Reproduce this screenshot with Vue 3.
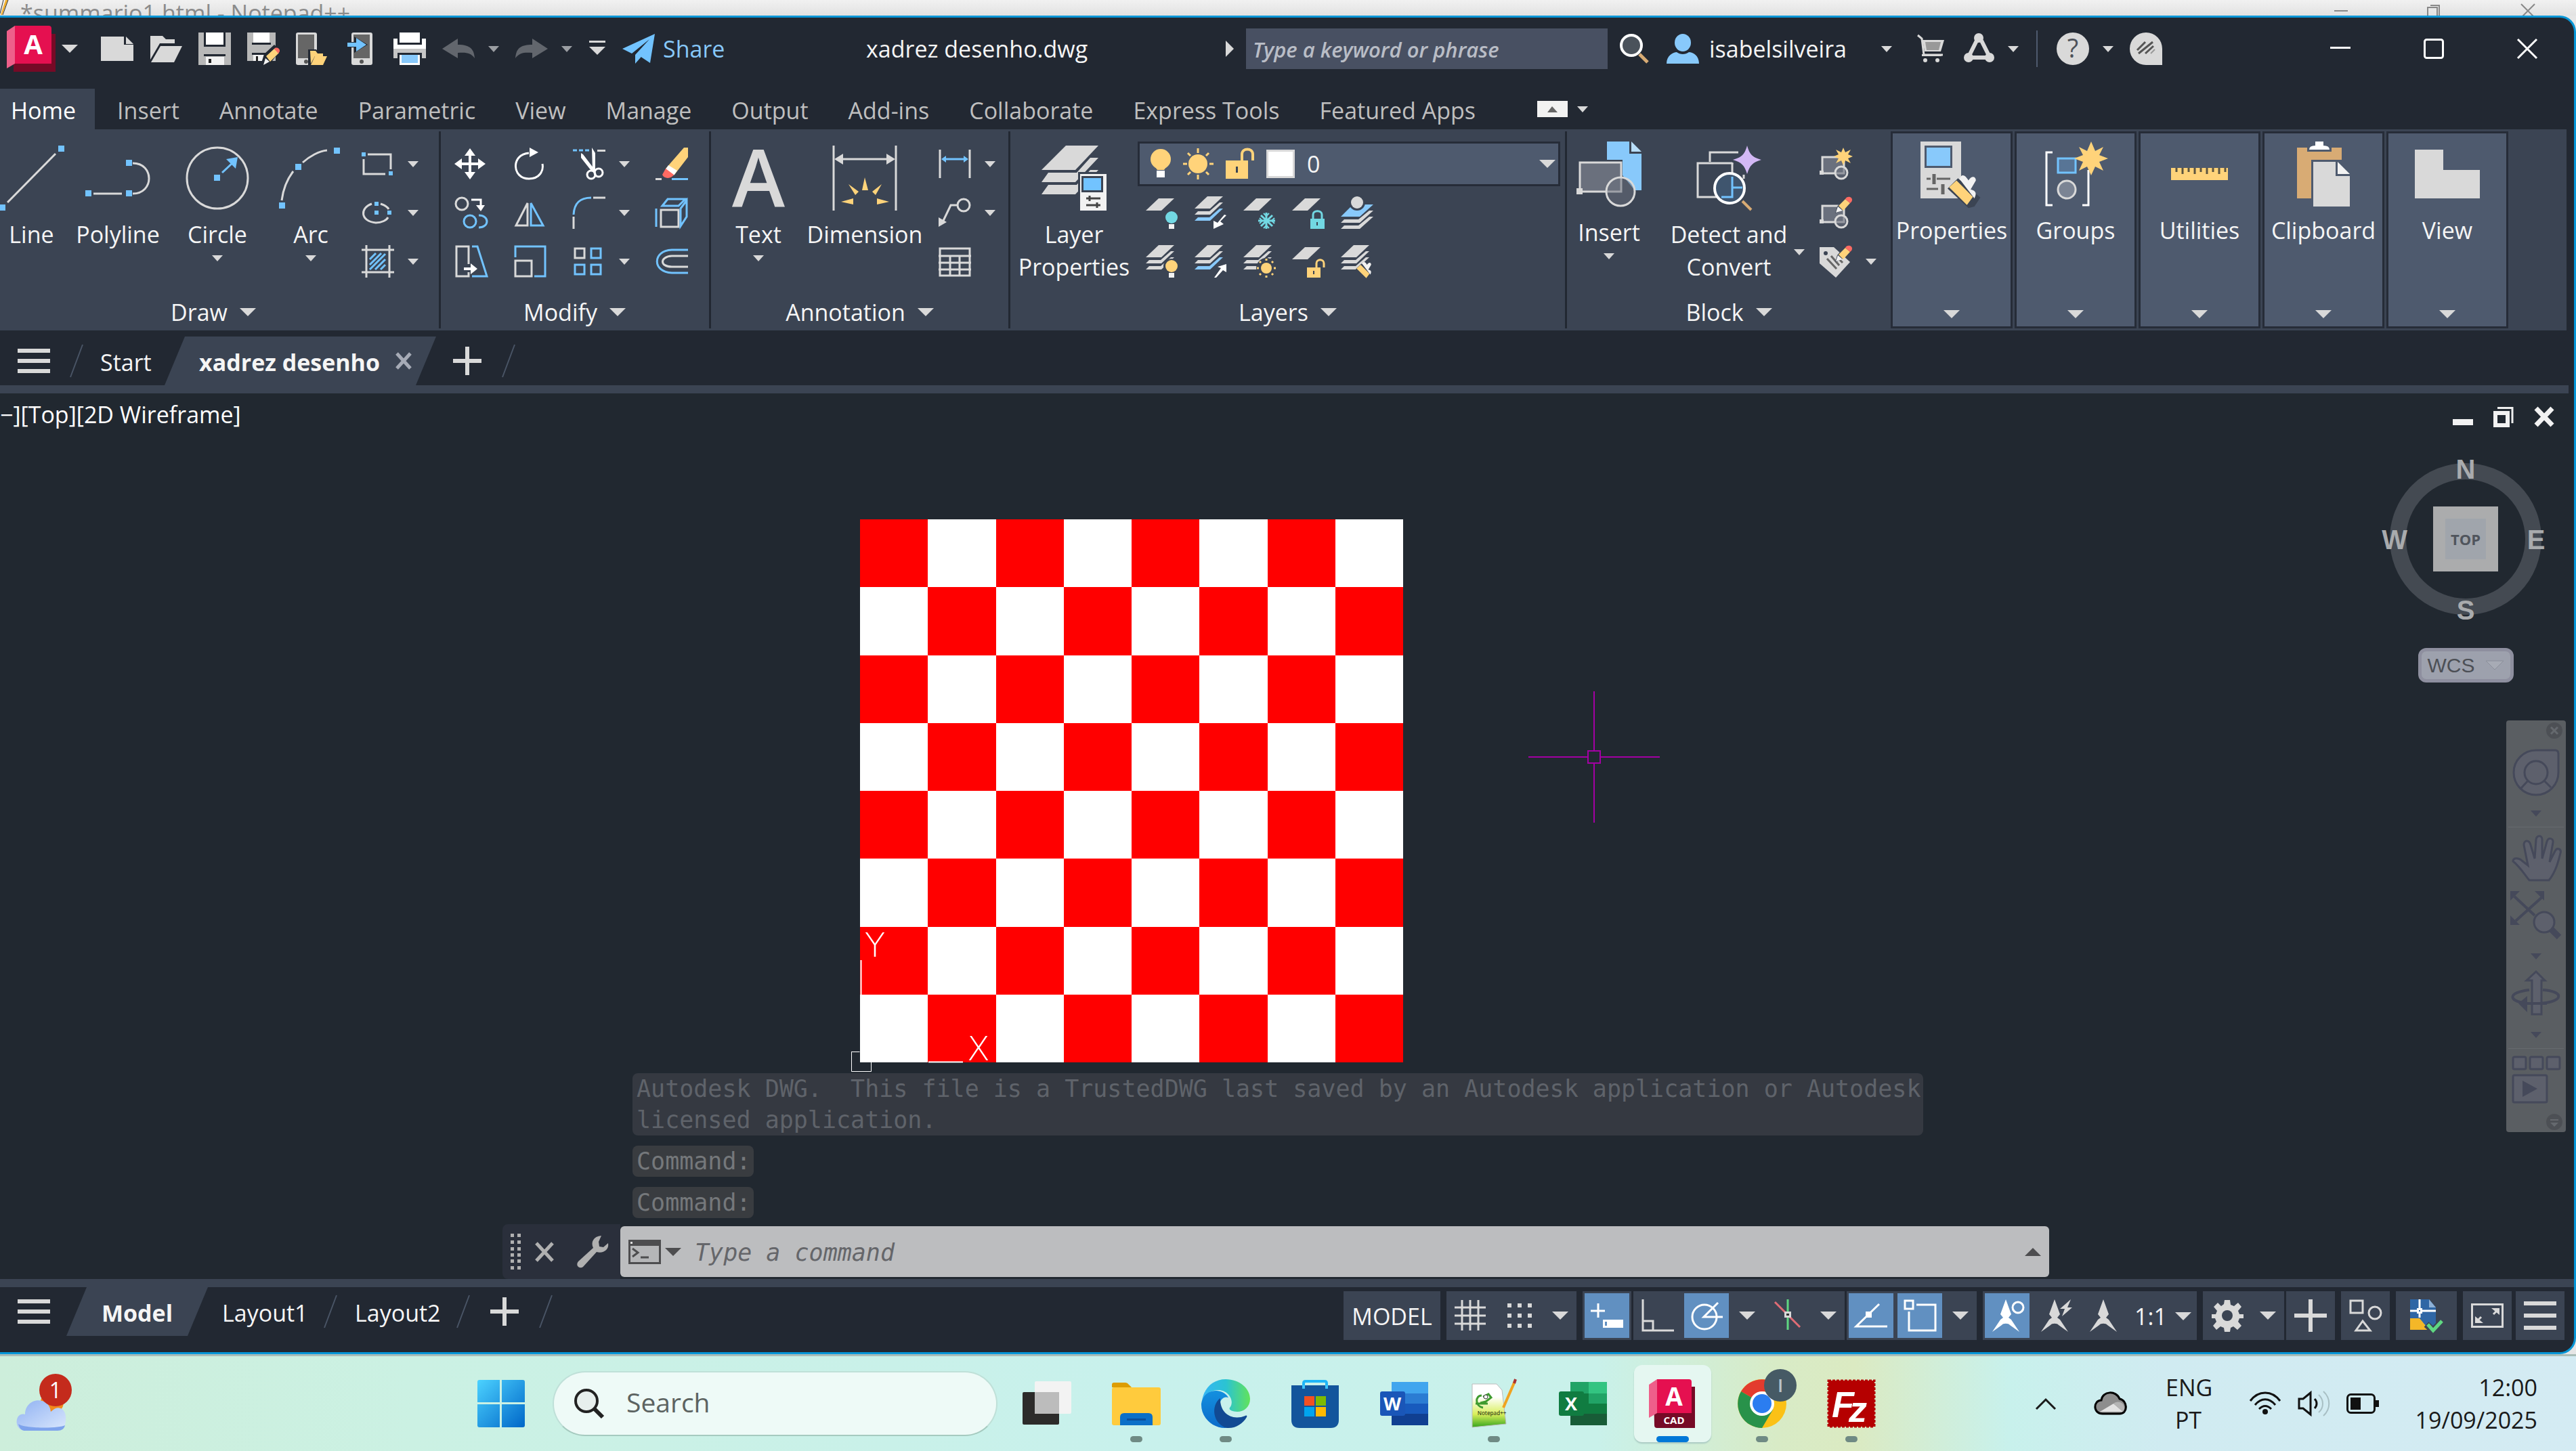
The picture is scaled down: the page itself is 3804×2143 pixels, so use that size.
<template>
  <div class="desktop">
    <!-- window behind -->
    <div class="behind">
      <Icon name="pencilTip" />
      <span class="behind-title">*summario1.html - Notepad++</span>
      <Icon name="behindMin" class="behind-btn" />
      <Icon name="behindMax" class="behind-btn" />
      <Icon name="behindClose" class="behind-btn last" />
    </div>

    <main class="window">
      <header class="titlebar">
        <div class="quick">
          <button class="btn logo" aria-label="Application menu"><Icon name="logo" /><i class="caret mid"></i></button>
          <button v-for="q in quickTools" :key="q.icon" class="btn tool" :aria-label="q.icon">
            <Icon :name="q.icon" /><i v-if="q.caret" class="caret dim"></i>
          </button>
          <button class="btn" aria-label="Customize"><Icon name="customize" /></button>
          <button class="btn share"><Icon name="plane" />Share</button>
        </div>
        <div class="doc-name">xadrez desenho.dwg</div>
        <div class="account">
          <Icon name="expand" />
          <input class="keyword" type="text" aria-label="Search help" placeholder="Type a keyword or phrase" />
          <button class="btn find" aria-label="Search"><Icon name="magnifier" /></button>
          <button class="btn user"><Icon name="person" />isabelsilveira<i class="caret"></i></button>
          <button class="btn cart" aria-label="Cart"><Icon name="cart" /></button>
          <button class="btn tool apps" aria-label="Apps"><Icon name="appStore" /><i class="caret"></i></button>
          <span class="bar"></span>
          <button class="btn tool help" aria-label="Help"><Icon name="help" /><i class="caret"></i></button>
          <button class="btn feedback" aria-label="Feedback"><Icon name="feedback" /></button>
          <div class="win-controls">
            <button class="btn" aria-label="Minimize"><Icon name="winMin" /></button>
            <button class="btn" aria-label="Maximize"><Icon name="winMax" /></button>
            <button class="btn" aria-label="Close"><Icon name="winClose" /></button>
          </div>
        </div>
      </header>

      <nav class="ribbon-tabs">
        <a v-for="(t, i) in ribbonTabs" :key="t" href="#" :class="{ active: i === 0 }">{{ t }}</a>
        <button class="btn collapse" aria-label="Minimize ribbon"><Icon name="collapse" /><i class="caret"></i></button>
      </nav>

      <section class="ribbon">
        <div class="panel draw">
          <div class="panel-body">
            <button v-for="b in drawTools" :key="b.icon" class="btn big">
              <Icon :name="b.icon" /><span>{{ b.label }}</span><i v-if="b.caret" class="caret"></i>
            </button>
            <div class="tools">
              <button v-for="t in drawSmall" :key="t" class="btn tool" :aria-label="t"><Icon :name="t" /><i class="caret"></i></button>
            </div>
          </div>
          <button class="btn panel-title">Draw<i class="caret mid"></i></button>
        </div>

        <div class="panel modify">
          <div class="panel-body">
            <div class="tools">
              <button v-for="t in modifyTools" :key="t.icon" class="btn tool" :aria-label="t.icon">
                <Icon :name="t.icon" /><i v-if="t.caret" class="caret"></i>
              </button>
            </div>
          </div>
          <button class="btn panel-title">Modify<i class="caret mid"></i></button>
        </div>

        <div class="panel annotation">
          <div class="panel-body">
            <button class="btn big"><Icon name="text" /><span>Text</span><i class="caret"></i></button>
            <button class="btn big"><Icon name="dimension" /><span>Dimension</span></button>
            <div class="tools">
              <button class="btn tool" aria-label="Linear"><Icon name="linear" /><i class="caret"></i></button>
              <button class="btn tool" aria-label="Leader"><Icon name="leader" /><i class="caret"></i></button>
              <button class="btn tool" aria-label="Table"><Icon name="table" /></button>
            </div>
          </div>
          <button class="btn panel-title">Annotation<i class="caret mid"></i></button>
        </div>

        <div class="panel layers">
          <div class="panel-body">
            <button class="btn big"><Icon name="layerProps" /><span>Layer<br />Properties</span></button>
            <div class="layer-side">
              <div class="combo">
                <Icon name="bulb" /><Icon name="sun" /><Icon name="unlock" /><Icon name="swatch" />
                <select aria-label="Layer"><option>0</option></select>
                <i class="caret mid"></i>
              </div>
              <div class="tools">
                <button v-for="t in layerTools" :key="t" class="btn tool" :aria-label="t"><Icon :name="t" /></button>
              </div>
            </div>
          </div>
          <button class="btn panel-title">Layers<i class="caret mid"></i></button>
        </div>

        <div class="panel block">
          <div class="panel-body">
            <button class="btn big insert"><Icon name="insert" /><span>Insert</span><i class="caret"></i></button>
            <div class="detect">
              <button class="btn big"><Icon name="detect" /><span>Detect and<br />Convert</span></button>
              <i class="caret"></i>
            </div>
            <div class="tools">
              <button class="btn tool" aria-label="Create block"><Icon name="blockNew" /></button>
              <button class="btn tool" aria-label="Edit block"><Icon name="blockEdit" /></button>
              <button class="btn tool" aria-label="Edit attributes"><Icon name="tagEdit" /><i class="caret"></i></button>
            </div>
          </div>
          <button class="btn panel-title">Block<i class="caret mid"></i></button>
        </div>

        <button v-for="c in collapsedPanels" :key="c.label" class="btn folded">
          <Icon :name="c.icon" /><span>{{ c.label }}</span><i class="caret mid"></i>
        </button>
      </section>

      <nav class="file-tabs">
        <button class="btn" aria-label="Menu"><Icon name="menu" /></button>
        <Icon name="slash" class="slash first" />
        <a href="#" class="start">Start</a>
        <div class="slant file">
          <a href="#">xadrez desenho</a>
          <button class="btn" aria-label="Close tab"><Icon name="tabClose" /></button>
        </div>
        <button class="btn add" aria-label="New tab"><Icon name="plus" /></button>
        <Icon name="slash" class="slash last" />
      </nav>

      <section class="canvas">
        <div class="view-label">−][Top][2D Wireframe]</div>
        <div class="view-controls">
          <button class="btn" aria-label="Minimize view"><Icon name="viewMin" /></button>
          <button class="btn" aria-label="Restore view"><Icon name="viewMax" /></button>
          <button class="btn" aria-label="Close view"><Icon name="viewClose" /></button>
        </div>

        <div class="board">
          <i v-for="n in 64" :key="n" :class="{ red: isRed(n - 1) }"></i>
        </div>
        <Icon name="ucs" class="ucs" />
        <Icon name="crosshair" class="crosshair" />

        <div class="viewcube">
          <Icon name="compass" />
          <button class="btn wcs">WCS<Icon name="wcsArrow" /></button>
        </div>

        <div class="navbar">
          <Icon name="navClose" class="corner" />
          <button class="btn" aria-label="Steering wheel"><Icon name="wheel" /></button>
          <i class="caret"></i>
          <hr />
          <button class="btn" aria-label="Pan"><Icon name="hand" /></button>
          <button class="btn" aria-label="Zoom"><Icon name="zoomExt" /></button>
          <i class="caret"></i>
          <button class="btn" aria-label="Orbit"><Icon name="orbit" /></button>
          <i class="caret"></i>
          <hr />
          <button class="btn" aria-label="ShowMotion"><Icon name="motion" /></button>
          <Icon name="navMore" class="corner more" />
        </div>

        <div class="history">
          <p class="long">Autodesk DWG.&nbsp; This file is a TrustedDWG last saved by an Autodesk application or Autodesk<br />licensed application.</p>
          <p>Command:</p>
          <p>Command:</p>
        </div>

        <div class="command">
          <div class="command-grip">
            <Icon name="grip" />
            <button class="btn" aria-label="Close command line"><Icon name="cmdClose" /></button>
            <button class="btn" aria-label="Customize command line"><Icon name="wrench" /></button>
          </div>
          <div class="command-box">
            <Icon name="prompt" /><i class="caret mid"></i>
            <input type="text" aria-label="Command" placeholder="Type a command" />
            <i class="caret up"></i>
          </div>
        </div>
      </section>

      <footer class="bottom">
        <nav class="layouts">
          <button class="btn" aria-label="Menu"><Icon name="menu" /></button>
          <div class="slant model"><a href="#">Model</a></div>
          <a href="#" class="layout">Layout1</a>
          <Icon name="slash" class="slash" />
          <a href="#" class="layout">Layout2</a>
          <Icon name="slash" class="slash" />
          <button class="btn" aria-label="New layout"><Icon name="plus" /></button>
          <Icon name="slash" class="slash" />
        </nav>
        <div class="status">
          <div v-for="(g, i) in statusGroups" :key="i" class="status-group" :class="g.cls">
            <template v-for="(it, k) in g.items" :key="k">
              <button v-if="it === 'caret'" class="btn drop" aria-label="More"><i class="caret mid"></i></button>
              <button v-else-if="it.text" class="btn word">{{ it.text }}<i v-if="it.caret" class="caret mid"></i></button>
              <button v-else class="btn cell" :class="{ on: it.on }" :aria-label="it.icon"><Icon :name="it.icon" /></button>
            </template>
          </div>
        </div>
      </footer>
    </main>

    <footer class="taskbar">
      <button class="btn weather" aria-label="Weather"><Icon name="weather" /></button>
      <div class="task-center">
        <button class="btn app" aria-label="Start"><Icon name="windows" /></button>
        <label class="search"><Icon name="searchDark" /><input type="text" placeholder="Search" /></label>
        <button v-for="a in apps" :key="a.icon" class="btn app" :class="a.state" :aria-label="a.icon">
          <Icon :name="a.icon" />
        </button>
      </div>
      <div class="tray">
        <Icon name="chevron" />
        <Icon name="cloud" class="tray-cloud" />
        <div class="lang">ENG<br />PT</div>
        <div class="tray-icons"><Icon name="wifi" /><Icon name="speaker" /><Icon name="battery" /></div>
        <div class="clock">12:00<br />19/09/2025</div>
      </div>
    </footer>
  </div>
</template>

<script setup>
import { h } from 'vue'

const G = '#d9d9d9'
const B = '#72c3ff'
const Y = '#ffd37a'
const T = '#72d8e3'
const D = '#3b4453'
const N = '#45495a'

const line = (d, c = G, w = 3) => `<path d="${d}" fill="none" stroke="${c}" stroke-width="${w}"/>`
const fill = (d, c = G) => `<path d="${d}" fill="${c}"/>`
const box = (x, y, w, hh, c = G) => `<rect x="${x}" y="${y}" width="${w}" height="${hh}" fill="${c}"/>`
const frame = (x, y, w, hh, c = G, s = 3) => `<rect x="${x}" y="${y}" width="${w}" height="${hh}" fill="none" stroke="${c}" stroke-width="${s}"/>`
const ring = (x, y, r, c = G, w = 3, f = 'none') => `<circle cx="${x}" cy="${y}" r="${r}" fill="${f}" stroke="${c}" stroke-width="${w}"/>`
const word = (x, y, s, t, c = '#fff', w = 700, f = 'Open Sans') =>
  `<text x="${x}" y="${y}" font-size="${s}" font-weight="${w}" text-anchor="middle" fill="${c}" font-family="${f}, sans-serif">${t}</text>`

// shared pieces of the layer and block icons
const sheet = fill('M19 3H42L23 21H0z')
const stack = (last = G) =>
  fill('M19 0H42L23 18H0z') + fill('M37 9h5L23 27H0l5-5h17z') + fill('M37 18h5L23 36H0l5-5h17z', last)
const pencil = '<path d="M23 25l3-10L38 1c3-2 9 2 8 6L33 21z" fill="#3b4453"/>' +
  fill('M28 14L38 4l7 6-10 11z', Y) + fill('M38 4c2-5 10-4 10 1 0 3-2 4-3 5z', '#ff6b63') + fill('M24 24l3-9 7 6z', '#f2f2f2')
const smallBulb = (c) => `<ellipse cx="38" cy="31" rx="9" ry="9" fill="${c}"/>` + box(34, 41, 8, 7, '#f2f2f2')
const smallBlock = `<rect x="4" y="14" width="32" height="24" fill="#6a707d" stroke="${G}" stroke-width="3"/>` +
  box(0, 34, 6, 6) + `<circle cx="32" cy="37" r="9" fill="#6a707d99" stroke="${G}" stroke-width="3"/>`
const compassMark = (c) => fill('M22 0l8 22-4 5 4 3 12 18-14-10c-2-3-10-3-12 0L2 48l12-18 4-3-4-5z', c)
const brush = (x, y, s) => `<g transform="translate(${x} ${y}) scale(${s})">` +
  fill('M0 16L14 2l30 26-8 12-8 2z', '#3b4453') + fill('M2 14L12 5 34 27 26 38z', Y) +
  fill('M16 3c3-8 8-5 12 2 4-7 10-6 10 0l-7 12c8 2 8 6 5 12z', '#f2f2f2') + '</g>'

const icons = {
  pencilTip: [14, 24, fill('M8 0h4L3 22H1z', '#f2b233') + line('M5 0L0 20M12 0L4 22', '#333', 1)],
  behindMin: [30, 24, box(5, 15, 20, 2, '#888')],
  behindMax: [30, 24, line('M5 24V11h14v13M9 8h13v16', '#888', 2)],
  behindClose: [30, 24, line('M5 6l20 20M25 6L5 26', '#888', 2)],

  logo: [72, 68, fill('M62 12h10v56H10V54h52z', '#760a26') + fill('M12 0h50q4 0 4 4v52H12z', '#e51050') +
    fill('M0 8L12 0v56L0 63z', '#ee5f8a') + word(39, 42, 40, 'A')],
  fileNew: [48, 48, fill('M0 6h34v12h14v24H0z') + fill('M37 6l11 11H37z')],
  fileOpen: [48, 48, fill('M1 5h18l5 5h13v6H15L1 40z') + fill('M16 20h32L36 44H2z')],
  save: [48, 48, box(0, 0, 48, 48, '#b8b8b8') + box(11, 0, 27, 18, '#fff') + box(8, 0, 3, 21, '#222832') + box(37, 0, 3, 21, '#222832') +
    box(8, 18, 32, 3, '#222832') + box(8, 32, 32, 3, '#222832') + box(11, 36, 27, 12, '#f2f2f2') + box(15, 39, 4, 6, '#222')],
  saveAs: [48, 48, box(0, 0, 42, 42, '#b8b8b8') + box(9, 0, 24, 15, '#fff') + box(7, 15, 28, 3, '#222832') + box(7, 30, 20, 3, '#222832') +
    box(9, 33, 18, 9, '#f2f2f2') + box(13, 35, 3, 7, '#222') + fill('M20 48l5-16L40 18l9 8-15 20z', '#222832') +
    fill('M28 35l12-11 7 6-13 13z', Y) + fill('M40 24c2-3 9-1 8 4l-2 3z', '#ff6b63') + fill('M24 48l3-10 6 5z', '#f2f2f2')],
  mobileOpen: [48, 48, '<rect width="31" height="48" rx="3" fill="#d9d9d9"/>' + box(3, 3, 24, 35, '#666') + '<circle cx="15" cy="43" r="3" fill="#555"/>' +
    fill('M18 25h12l3 4h11l4 6-6 13H18z', '#222832') + fill('M21 27h8l3 4h8v4H28l-6 11z', Y) + fill('M28 35h18l-6 13H22z', Y)],
  mobileImport: [48, 48, '<rect x="10" width="31" height="48" rx="3" fill="#d9d9d9"/>' + box(13, 3, 24, 35, '#666') + '<circle cx="25" cy="43" r="3" fill="#555"/>' +
    fill('M2 14h12V6l20 12-20 12v-8H2z', '#222832') + fill('M4 15h13V8l15 10-15 10v-7H4z', B)],
  print: [48, 48, box(9, 0, 30, 15, '#fff') + fill('M0 9h6v9h36V9h6v15H0z', '#fff') + fill('M0 24h48v14h-6V30H6v8H0z', '#c6c6c6') + box(9, 33, 30, 15, '#fff') + box(12, 33, 24, 12, '#88c9fb')],
  undo: [48, 48, fill('M0 24L23 9v9c20 0 24 8 25 20-6-8-12-9-25-8v8z', '#62666d')],
  redo: [48, 48, fill('M48 24L25 9v9C5 18 1 26 0 38c6-8 12-9 25-8v8z', '#62666d')],
  customize: [26, 24, box(1, 0, 24, 3) + fill('M1 9h24L13 21z')],
  plane: [48, 48, fill('M48 2L0 24l14 7L40 10 19 33v13l8-9z', B) + fill('M48 2L23 33l18 12z', B)],
  expand: [12, 24, fill('M0 0l12 12L0 24z')],
  magnifier: [44, 44, ring(18, 17, 15, '#fff', 4, '#4a525b') + line('M30 30l12 12', '#d8ab74', 5)],
  person: [48, 48, '<ellipse cx="24" cy="15" rx="12" ry="13" fill="#88c9fb"/>' + fill('M0 46c0-12 10-17 15-17 5 4 13 4 18 0 6 0 15 5 15 17z', '#88c9fb')],
  cart: [40, 44, line('M0 2l6 5 3 24h28', G, 3) + fill('M7 9h32l-5 17H10z') + fill('M11 12h23l-3 12H13z', '#999') + box(6, 30, 29, 3) + '<circle cx="11" cy="39" r="3" fill="#d9d9d9"/><circle cx="29" cy="39" r="3" fill="#d9d9d9"/>'],
  appStore: [45, 44, '<ellipse cx="22" cy="6" rx="7" ry="7" fill="#d9d9d9"/><circle cx="7" cy="35" r="7" fill="#d9d9d9"/><circle cx="38" cy="35" r="7" fill="#d9d9d9"/>' +
    line('M19 10L8 32M26 10l11 22', G, 6) + box(10, 32, 24, 6)],
  help: [48, 48, '<circle cx="24" cy="24" r="24" fill="#d9d9d9"/>' + word(24, 37, 38, '?', '#4d5259', 400)],
  feedback: [48, 48, fill('M24 0a24 24 0 0 1 24 24v24H24a24 24 0 0 1 0-48z') + line('M11 26L23 14M13 31L34 14M23 31l12-11', '#555', 3) + line('M31 31l6-6', '#999', 2)],
  winMin: [30, 30, box(0, 12, 30, 3, '#fff')],
  winMax: [30, 30, '<rect x="1.5" y="1.5" width="27" height="27" rx="3" fill="none" stroke="#fff" stroke-width="3"/>'],
  winClose: [30, 30, line('M1 1l28 28M29 1L1 29', '#fff', 3)],
  collapse: [45, 24, box(0, 0, 45, 24, '#f2f2f2') + fill('M15 17h15L22 8z', '#666')],

  line: [96, 96, line('M12 84L83 12') + box(0, 87, 9, 9, B) + box(87, 0, 9, 9, B)],
  polyline: [96, 96, line('M12 71H54M70 26c32 0 32 45 0 45') + box(0, 66, 9, 9, B) + box(60, 66, 9, 9, B) + box(60, 21, 9, 9, B)],
  circle: [96, 96, ring(48, 48, 45) + box(43, 43, 9, 9, B) + line('M55 40l15-14', B) + fill('M61 20l17-3-3 17z', B)],
  arc: [96, 96, line('M5 81c2-16 7-30 17-43M36 25C46 16 60 8 72 7') + box(1, 84, 9, 9, B) + box(25, 27, 9, 9, B) + box(82, 3, 9, 9, B)],
  rectTool: [48, 48, line('M9 10H43V32M3 17V39H35') + box(0, 7, 6, 6, B) + box(40, 35, 6, 6, B)],
  ellipseTool: [48, 48, line('M15 11C-3 17-2 37 21 39c9 0 16-4 18-8M28 11c6 2 10 4 12 8') + box(19, 8, 6, 6, B) + box(19, 21, 6, 6, B) + box(38, 21, 6, 6, B)],
  hatch: [48, 48, line('M7 0V48M41 0V48M0 7H48M0 40H48') + line('M12 21l9-9M12 29l17-17M12 36L35 13M20 36l15-15M28 36l7-7', B)],

  move: [48, 48, fill('M22 1l8 11h-6v10h10v-6l11 8-11 8v-6H24v10h6l-8 11-8-11h6V26H10v6L-1 24l11-8v6h10V12h-6z', '#fff')],
  rotate: [48, 48, line('M22 8C-5 10-3 46 22 46c16 0 22-12 20-22', '#fff') + fill('M23 0l13 7-13 7z', '#fff')],
  trim: [48, 48, line('M0 4h24', B, 3).replace('/>', ' stroke-dasharray="6 3"/>') + box(36, 3, 12, 3) + fill('M28 0l5 8v26h-4zM12 8l3 2 16 21-4 3L12 15z', '#fff') + ring(27, 40, 6, '#fff') + ring(38, 37, 6, '#fff')],
  erase: [48, 48, fill('M48 0v14L28 40l-13-9L42 0z', Y) + fill('M19 26l13 8-5 7-12-9z', '#fff') + fill('M15 31l12 9c-3 6-14 7-17 0z', '#ff6b63') + box(0, 45, 9, 3) + box(24, 45, 24, 3, B)],
  copy: [48, 48, ring(10, 11, 9) + line('M24 5h14v10', '#fff') + fill('M31 13h13l-6 9z', '#fff') + ring(22, 37, 9, B) + line('M35 28c16 0 16 18 0 18', B)],
  mirror: [48, 48, line('M20 10V43H3z') + line('M25 10V43H43z', B)],
  fillet: [48, 48, line('M1 27C2 10 10 2 27 2', B) + line('M1 30V48M30 2H48')],
  explode: [48, 48, frame(8, 20, 26, 25) + line('M10 14L18 4H44L34 14zM37 18l9-12v24l-9 14zM1 18V45', B)],
  stretch: [48, 48, line('M20 28V2H2V46H20V40') + line('M25 2h8l14 44H25', B) + fill('M13 33h10v-6l10 8-10 8v-6H13z', '#fff')],
  scale: [48, 48, line('M2 18V2H46V46H30', B) + frame(2, 23, 24, 23)],
  array: [48, 48, frame(3, 5, 14, 14) + frame(27, 5, 14, 14, B) + frame(3, 29, 14, 14, B) + frame(27, 29, 14, 14, B)],
  offset: [48, 48, line('M48 7H24C-5 8-5 40 24 41H48', B) + line('M48 16H24C6 17 6 32 24 32H48')],

  text: [96, 96, word(48, 90, 118, 'A', G, 600)],
  dimension: [96, 96, line('M2 0V96M94 0V96M12 20H84') + fill('M3 20l13-8v16zM93 20l-13-8v16z') +
    fill('M44 66l4-19 5 19zM24 57l15 11-5 5zM73 57L59 68l5 5zM13 83l18-5v9zM84 83l-18-5v9z', Y)],
  linear: [48, 48, line('M2 3V45M46 3V45') + line('M8 17H40', B) + fill('M4 17l7-5v10zM44 17l-7-5v10z', B)],
  leader: [48, 48, ring(37, 13, 9) + line('M28 13H18L5 40') + fill('M0 45V31l12 7z')],
  table: [48, 48, frame(2, 5, 44, 40) + line('M0 16H48M0 26H48M0 36H48M17 16V45M31 16V45')],

  layerProps: [96, 96, fill('M36 0H84L50 36H0z') + fill('M72 18h12L50 54H0l10-14h42z') + fill('M72 36h12L50 72H0l10-14h42z') +
    box(54, 39, 42, 57, D) + box(57, 42, 39, 54, '#f2f2f2') + box(59, 45, 32, 24, D) + box(62, 48, 26, 18, B) +
    line('M66 78H87M66 88H87M71 74v8M82 84v8', '#444', 3)],
  bulb: [30, 48, '<ellipse cx="15" cy="17" rx="15" ry="15" fill="#ffd37a"/>' + fill('M5 26h20l-5 7H10z', Y) + box(9, 34, 12, 10, '#fff')],
  sun: [45, 48, `<circle cx="22" cy="24" r="14" fill="${Y}"/>` + line('M22 1v7M22 40v7M0 24h6M39 24h6M7 8l4 4M34 36l4 4M7 40l4-4M34 12l4-4', Y)],
  unlock: [42, 48, box(0, 19, 33, 27, Y) + line('M24 19V10c0-10 16-10 16 0v9', Y, 4) + box(15, 28, 3, 9, '#3b4453')],
  swatch: [42, 48, box(0, 3, 42, 42, G) + box(3, 6, 36, 36, '#fff')],
  layOff: [48, 48, sheet + smallBulb(T)],
  layCurrent: [48, 48, stack('#88c9fb') + fill('M47 28l-9 9 5 4-15 7V36l6 3 10-12z', '#fff')],
  layFreeze: [48, 48, sheet + line('M34 24V48M22 36H47M26 28L43 44M43 28L26 44', T, 3) + line('M30 25l4 4 4-4M30 47l4-4 4 4M24 32l4 4-4 4M46 32l-4 4 4 4', T, 2)],
  layLock: [48, 48, sheet + box(27, 33, 21, 15, T) + line('M31 33v-6c0-7 13-7 13 0v6', T) + box(36, 38, 2, 5, D)],
  layPrev: [48, 48, fill('M18 12H48L28 30H0z', '#88c9fb') + '<ellipse cx="24" cy="9" rx="12" ry="12" fill="#3b4453"/><ellipse cx="24" cy="9" rx="9" ry="9" fill="#d9d9d9"/>' +
    fill('M42 21h6L28 39H0l5-5h21z') + fill('M42 30h6L28 48H0l5-5h21z')],
  layOn: [48, 48, stack() + '<ellipse cx="38" cy="31" rx="12" ry="11" fill="#3b4453"/>' + smallBulb(Y)],
  layMatch: [48, 48, stack('#88c9fb') + fill('M47 28v12l-5-3-10 11h-3l10-14-5-2z', '#fff')],
  layThaw: [48, 48, stack() + '<circle cx="34" cy="34" r="15" fill="#3b4453"/>' + `<circle cx="34" cy="34" r="8" fill="${Y}"/>` +
    line('M34 20v3M34 45v3M20 34h3M45 34h3M24 24l2 2M42 42l2 2M24 44l2-2M42 26l2-2', Y)],
  layUnlock: [48, 48, sheet + box(22, 33, 20, 15, Y) + line('M36 33v-6c0-7 11-7 11 0v6', Y) + box(31, 38, 2, 5, D)],
  layMerge: [48, 48, stack() + brush(22, 26, 0.6)],

  insert: [96, 96, fill('M45 0H78V18H96V72H86L68 50V27H45z', '#88c9fb') + fill('M81 0L96 15H81z', '#b8def9') +
    `<rect x="5" y="31" width="61" height="43" fill="#6a707d" stroke="${G}" stroke-width="3"/>` + box(0, 69, 9, 9) + `<circle cx="65" cy="74" r="21" fill="#6a707d88" stroke="${G}" stroke-width="3"/>`],
  detect: [96, 96, line('M53 25V26H2V76H30M20 24V10H62') + line('M53 26V42M70 43v6') + fill('M75 0c4 14 8 17 21 21-13 4-17 8-21 21-4-13-8-17-21-21 13-4 17-7 21-21z', '#d3b8f5') +
    ring(49, 63, 22, '#fff', 4, '#3f556e') + line('M53 46V76H37M53 62H68', B) + line('M68 82l13 13', '#d8ab74', 4)],
  blockNew: [48, 48, smallBlock + fill('M35 0l3 7 8-4-4 7 7 3-7 3 4 7-8-4-3 7-3-7-8 4 4-7-7-3 7-3-4-7 8 4z', Y)],
  blockEdit: [48, 48, smallBlock + pencil],
  tagEdit: [48, 48, fill('M0 3h21l24 22-21 23L0 27z') + '<circle cx="9" cy="12" r="3" fill="#3b4453"/>' + line('M11 20l14 15M17 16l12 14M28 20l6 6', '#666') + pencil],
  props: [96, 96, box(2, 0, 60, 84) + box(8, 6, 41, 33, '#4e5a6e') + box(11, 9, 35, 27, '#88c9fb') + line('M11 55H17M26 55H46M11 70H28', '#666', 3) + line('M22 48v15M35 63v15', '#666', 5) + brush(42, 52, 1.1)],
  groups: [96, 96, line('M14 16H5V94H14M58 94H67V42', '#fff') + `<rect x="22" y="25" width="26" height="21" fill="#587596" stroke="${B}" stroke-width="3"/>` +
    `<circle cx="35" cy="71" r="13" fill="#7b8494" stroke="${G}" stroke-width="3"/>` + fill('M71 0l6 14 12-6-6 12 13 5-13 5 6 13-12-6-6 13-6-13-12 6 6-13-13-5 13-5-6-12 12 6z', Y)],
  ruler: [96, 96, box(6, 39, 84, 18, Y) + line('M14 39v6M23 39v9M32 39v6M41 39v9M50 39v6M59 39v9M68 39v6M77 39v9M86 39v6', '#5b5440', 3)],
  clipboard: [96, 96, box(9, 9, 66, 75, '#d8ab74') + box(30, 27, 50, 66, '#4e5a6e') + box(24, 6, 36, 9, '#4e5a6e') + fill('M27 12q0-6 9-6V0h12v6q9 0 9 6z', '#fff') +
    fill('M33 30H66V51H87V96H33z') + fill('M69 30L87 48H69z', '#f2f2f2')],
  viewBase: [96, 96, fill('M0 12H42V42H96V84H0z')],

  menu: [48, 36, box(0, 0, 48, 6) + box(0, 15, 48, 6) + box(0, 30, 48, 6)],
  slash: [20, 48, line('M1 48L19 0', '#4a5566', 2)],
  tabClose: [24, 24, line('M2 1l20 22M22 1L2 23', '#a6abb6', 5)],
  plus: [42, 42, box(18, 0, 6, 42) + box(0, 18, 42, 6)],

  viewMin: [30, 30, box(0, 18, 30, 9, '#f2f2f2')],
  viewMax: [30, 30, line('M6 1.5H28V24', '#eee', 3) + frame(3, 9, 18, 18, '#f2f2f2', 6)],
  viewClose: [30, 30, line('M3 2l24 25M27 2L3 27', '#f2f2f2', 7)],
  ucs: [210, 210, line('M0.5 176.5h12M0.5 176V205.500H29.5V192', '#fff', 1) + line('M14.5 41V92M114 191.500H165', '#fff', 2) +
    word(35, 36, 50, 'Y', '#fff', 200, 'DejaVu Sans') + word(188, 189, 50, 'X', '#fff', 200, 'DejaVu Sans')],
  crosshair: [194, 194, line('M0 97H87M107 97H194M97 0V87M97 107V194M88 88h18v18h-18z', '#a300a3', 2)],
  compass: [210, 240, ring(105, 120, 100, '#444a52', 24) + box(57, 72, 96, 96, '#abacad') + box(75, 90, 60, 60, '#a0a5ac') +
    '<g font-family="Liberation Sans, sans-serif" font-weight="700" text-anchor="middle" font-size="40" fill="#a9abad"><text x="105" y="31">N</text><text x="0" y="135">W</text><text x="209" y="135">E</text><text x="105" y="239">S</text></g>' +
    '<text x="105" y="129" font-family="Liberation Sans Narrow, Open Sans, sans-serif" font-weight="700" font-size="22" text-anchor="middle" fill="#50555d">TOP</text>'],
  wcsArrow: [28, 16, '<path d="M1 1H27L14 14z" fill="#a7abb5" stroke="#8a8e9a"/>'],
  navClose: [24, 24, ring(12, 12, 11, '#4d5055', 2, '#4d5055') + line('M7 7l10 10M17 7L7 17', '#65696e', 3)],
  navMore: [24, 24, ring(12, 12, 11, '#4d5055', 2, '#4d5055') + line('M6 9h12', '#65696e', 2) + fill('M6 13h12l-6 6z', '#65696e')],
  wheel: [72, 72, `<path d="M36 3h28q5 0 5 5v28a33 33 0 1 1-33-33z" fill="#5d606c" stroke="${N}" stroke-width="3"/>` + ring(36, 36, 17, N, 3, '#5d606c') + line('M24 48L14 59M48 48l10 10', N)],
  hand: [72, 72, `<path d="M26 68C18 58 12 48 2 40c0-6 9-5 13-1l9 7-6-30c0-8 8-8 10 0l6 20 2-28c1-7 9-7 9 0v28l7-25c2-7 10-5 9 1l-5 29 8-16c3-6 10-3 8 3-3 12-7 28-17 40z" fill="#5d606c" stroke="${N}" stroke-width="3"/>`],
  zoomExt: [76, 72, line('M6 8L36 36M8 44L48 8', N, 4) + fill('M0 0h14L0 14zM36 0h14v14zM0 50V36l14 14z', N) + line('M60 56l12 12', N, 9) + ring(50, 46, 15, N, 3, '#5d606c')],
  orbit: [72, 72, line('M26 30C-6 34-6 46 22 50H40c38-2 38-18 6-20', N, 4) + `<path d="M30 66V16H22L36 3l13 13H44V66z" fill="#5d606c" stroke="${N}" stroke-width="3"/>` + fill('M10 50l13-11v24z', N) + line('M22 50h30', N, 4)],
  motion: [72, 72, [2, 27, 52].map((x) => `<rect x="${x}" y="2" width="19" height="18" rx="2" fill="#5d606c" stroke="${N}" stroke-width="3"/>`).join('') +
    `<rect x="2" y="29" width="50" height="40" rx="2" fill="#5d606c" stroke="${N}" stroke-width="3"/>` + fill('M16 37l22 12-22 12z', N)],
  grip: [16, 54, [0, 10, 20, 29, 38, 48].map((y) => box(0, y, 5, 5, '#b0b0b0') + box(10, y, 5, 5, '#b0b0b0')).join('')],
  cmdClose: [28, 28, line('M2 1l24 26M26 1L2 27', '#b0b0b0', 5)],
  wrench: [48, 48, fill('M36 0c-12 1-16 10-12 18L2 38c-5 6 2 12 7 8l20-22c9 3 19-3 17-13l-7 6-6-1-1-7z', '#b0b0b0')],
  prompt: [48, 36, `<rect x="1.5" y="1.5" width="45" height="33" fill="#b5b6b8" stroke="#4d4d4f" stroke-width="3"/>` + box(0, 0, 48, 9, '#4d4d4f') + box(3, 3, 3, 3, '#ddd') +
    line('M6 13l8 6-8 6M18 26h12', '#4d4d4f', 3)],

  stGrid: [48, 48, line('M11 1V46M23 1V46M35 1V46M0 12H46M0 24H46M0 36H46')],
  stDots: [48, 48, [6, 21, 36].map((y) => [6, 21, 36].map((x) => box(x, y, 6, 6)).join('')).join('')],
  stDyn: [48, 48, line('M11 6V27M0 17H21', '#fff') + box(18, 30, 30, 12, '#fff') + box(21, 33, 3, 6, '#6190c1')],
  stOrtho: [48, 48, line('M2 0V46H48M2 32H17V46')],
  stPolar: [48, 48, ring(21, 26, 18, '#fff') + line('M41 5L20 26H48', '#fff')],
  stIso: [48, 48, line('M24 0V45', '#5fd882') + line('M5 4l37 37', '#e06c75') + box(19, 18, 10, 9) + box(22, 21, 4, 3, '#333')],
  stAngle: [48, 48, line('M36 7L2 40H48', '#fff') + box(16, 18, 9, 9, '#fff')],
  stSnap: [48, 48, frame(2, 2, 12, 12, '#fff') + line('M19 8H47V46H8V18', '#fff')],
  stAnno: [48, 48, compassMark('#fff') + ring(40, 12, 8, '#fff')],
  stAuto: [48, 48, compassMark(G) + fill('M46 0L30 14h7l-4 11 15-13h-7z')],
  stScale: [48, 48, compassMark(G)],
  stGear: [46, 46, fill('M19 0h8l1 7 5 2 6-5 5 6-5 6 2 5h6v6h-6l-2 5 5 6-6 6-6-5-4 2-1 6h-8l-1-6-5-2-6 5-5-6 5-6-2-5H0v-6h6l2-5-5-6 6-6 5 5 4-3z') + '<circle cx="23" cy="23" r="8" fill="#3b4453"/>'],
  stPlus: [48, 48, box(21, 0, 6, 48) + box(0, 21, 48, 6)],
  stShapes: [48, 48, frame(2, 2, 18, 18) + ring(38, 20, 9) + line('M20 32L10 46H31z')],
  stFile: [48, 48, fill('M0 0H28L38 12V45H0z', '#2f66a5') + fill('M28 0L38 12H28z', '#8db0d6') + line('M14 0V27M0 17H38', '#fff', 3) + box(10, 13, 8, 8, '#fff') + box(13, 16, 2, 2, '#2f66a5') + fill('M0 28H14L28 45H0z', '#f4b728') +
    line('M24 37l10 9 13-13', D, 10) + line('M26 37l8 9 13-14', '#5fd882', 5)],
  stFull: [48, 36, frame(1.5, 1.5, 45, 33) + fill('M30 7h12v10zM6 29V19l12 10z') + line('M33 16l6-6M9 26l6-6')],
  stMenu: [48, 42, box(0, 0, 48, 6) + box(0, 18, 48, 6) + box(0, 36, 48, 6)],

  weather: [84, 88, '<defs><linearGradient id="wc" x1="0" y1="0" x2="1" y2="1"><stop offset="0" stop-color="#8fb1f2"/><stop offset="1" stop-color="#dbe8fd"/></linearGradient></defs>' +
    '<circle cx="52" cy="42" r="17" fill="#f28a1c"/><path d="M12 60c0-26 36-28 38-4 14-14 24 0 22 12 0 10-5 16-12 16H12C-5 84-4 56 12 60z" fill="url(#wc)"/><path d="M2 74c2 8 6 10 10 10h48c6 0 10-3 11-8-8 5-60 5-69-2z" fill="#7ea3ec"/>' +
    '<circle cx="57" cy="24" r="24" fill="#c42b1c"/>' + word(57, 36, 32, '1', '#fff', 400)],
  windows: [70, 70, '<defs><linearGradient id="wi" x1="0" y1="0" x2="1" y2="1"><stop offset="0" stop-color="#4cd2ff"/><stop offset="1" stop-color="#0067c8"/></linearGradient></defs>' +
    '<path d="M3 0H33V33H0V3q0-3 3-3zM36 0H67q3 0 3 3V33H36zM0 36H33V70H3q-3 0-3-3zM36 36H70V67q0 3-3 3H36z" fill="url(#wi)"/>'],
  searchDark: [45, 45, ring(18, 18, 16, '#222', 4, '#e7efed') + line('M30 30l12 12', '#222', 6)],
  taskView: [72, 72, '<rect y="19" width="54" height="48" rx="2" fill="#2c2b2a"/><rect x="18" y="3" width="54" height="48" rx="2" fill="#f3f3f3"/>' + box(18, 19, 36, 32, '#bcbcbc')],
  folder: [72, 72, fill('M0 8q0-3 3-3H20q3 0 5 3l4 4H0z', '#dd9d04') + '<rect y="12" width="72" height="56" rx="3" fill="#ffcb3d"/><path d="M12 68V56q0-6 6-6H54q6 0 6 6v12z" fill="#0b6fc8"/>' + box(22, 58, 28, 3, '#0a4f9c')],
  edge: [72, 72, '<defs><linearGradient id="e1" x1="0" y1="0" x2="1" y2="0"><stop offset="0" stop-color="#35b6f5"/><stop offset=".5" stop-color="#2bc3d2"/><stop offset="1" stop-color="#62e35a"/></linearGradient><linearGradient id="e2" x1="0" y1="0" x2="0" y2="1"><stop offset="0" stop-color="#1490df"/><stop offset="1" stop-color="#0b6bc9"/></linearGradient></defs>' +
    '<path d="M1 32C4 12 18 0 36 0c21 0 36 14 36 29 0 12-9 19-19 19-8 0-13-3-11-6 8-10-2-26-17-26C14 16 4 22 1 32z" fill="url(#e1)"/>' +
    '<path d="M0 36c2-14 13-20 23-19 9 1 14 5 17 10-8-3-14 6-13 13 2 14 16 21 26 20-4 8-12 12-18 12C16 72-1 56 0 36z" fill="url(#e2)"/>' +
    '<path d="M28 28c-14 10-12 38 10 44 12 1 23-6 29-16 1-2 0-3-2-2-20 8-38-4-37-26z" fill="#114a93"/>'],
  store: [72, 72, line('M19 14V6q0-3 3-3H50q3 0 3 3v8', '#1fb6f8', 4) + '<path d="M1 9H71V60q0 12-12 12H13Q1 72 1 60z" fill="#13559c"/>' +
    line('M19 9v5M53 9v5', '#3cc4fa', 4) + box(20, 25, 15, 14, '#f25022') + box(37, 25, 15, 14, '#7fba00') + box(20, 41, 15, 14, '#00a4ef') + box(37, 41, 15, 14, '#ffb900')],
  word: [72, 72, box(17, 4, 54, 17, '#41a5ee') + box(17, 21, 54, 15, '#2b7cd3') + box(17, 36, 54, 15, '#185abd') + box(17, 51, 54, 17, '#103f91') +
    '<rect y="18" width="37" height="36" rx="3" fill="#1a56b8"/>' + word(18, 46, 27, 'W')],
  notepad: [72, 72, '<defs><linearGradient id="np" x1="0" y1="0" x2="0" y2="1"><stop offset=".3" stop-color="#fff"/><stop offset=".7" stop-color="#d8ef5a"/><stop offset="1" stop-color="#35a51c"/></linearGradient></defs>' +
    '<path d="M4 7H40l8 9 6 50-50 5z" fill="url(#np)" stroke="#bbb"/>' + line('M18 24c-10 0-10 16 2 18M20 26l8-4 4 5-8 6-8 2M9 36h18', '#3f9b2f', 3) + '<circle cx="24" cy="26" r="3" fill="#fff" stroke="#333"/>' + word(33, 53, 8, 'Notepad++', '#3d4a1e', 600) +
    line('M67 3L50 42', '#f0a321', 4) + line('M68 0l-2 6', '#a33', 4)],
  excel: [72, 72, box(17, 4, 27, 17, '#21a366') + box(44, 4, 27, 17, '#33c481') + box(17, 21, 27, 15, '#107c41') + box(44, 21, 27, 15, '#21a366') + box(17, 36, 54, 15, '#107c41') + box(17, 51, 54, 17, '#185c37') +
    '<rect y="18" width="37" height="36" rx="3" fill="#107c41"/>' + word(18, 46, 27, 'X')],
  autocad: [72, 72, fill('M8 11H69V72H13q-4 0-4-4z', '#760a26') + fill('M13 0H60q4 0 4 4V50H13z', '#e51050') + fill('M1 8L13 0V50L1 57z', '#ee5f8a') + word(38, 39, 37, 'A') + word(38, 66, 15, 'CAD')],
  chrome: [88, 88, '<circle cx="36" cy="51" r="36" fill="#fbc116"/><path d="M36 51L5 33A36 36 0 0 1 67 33H36z" fill="#e33b2e"/><path d="M5 33a36 36 0 0 0 31 54l16-27-16-9z" fill="#28924a"/>' +
    '<circle cx="36" cy="51" r="18" fill="#fff"/><circle cx="36" cy="51" r="14" fill="#2b7df0"/><circle cx="63" cy="24" r="24" fill="#465a65"/>' + word(63, 34, 27, 'I', '#b9c3c9', 600)],
  filezilla: [72, 72, '<rect x="2" y="2" width="68" height="68" fill="#b50000" stroke="#b50000" stroke-width="3" stroke-dasharray="4 2"/>' +
    '<text x="7" y="56" font-size="54" font-weight="700" font-style="italic" fill="#fff" font-family="Liberation Sans, sans-serif">F<tspan dx="-8" dy="7">z</tspan></text>'],
  chevron: [32, 20, line('M2 18L16 4l14 14', '#1a1a1a', 3)],
  cloud: [48, 34, '<path d="M10 12C12-2 32-3 37 10c12 2 13 22 0 22H12C-3 32-2 12 10 12z" fill="#8d8d8d" stroke="#000" stroke-width="3"/>' + fill('M8 29L28 17 42 29z', '#e2e2e2') + fill('M28 17c8-6 17 0 16 8l-2 4z', '#b4b4b4')],
  wifi: [48, 36, line('M2 14C14-2 34-2 46 14M9 20c9-11 21-11 30 0M15 26c6-6 12-6 18 0', '#111', 3) + '<circle cx="24" cy="30" r="4" fill="#111"/>'],
  speaker: [48, 42, line('M2 14h6L19 5V37L8 28H2z', '#111', 3) + line('M25 14c4 4 4 10 0 14', '#111', 3) + line('M31 8c8 7 8 19 0 26M38 3c11 10 11 26 0 36', '#a8bfc4', 2)],
  battery: [48, 30, '<rect x="1.5" y="1.5" width="40" height="27" rx="5" fill="none" stroke="#111" stroke-width="3"/>' + box(6, 6, 15, 18, '#111') + box(43, 10, 5, 10, '#111')]
}

const Icon = (props) => {
  const [w, hh, body] = icons[props.name]
  return h('svg', { viewBox: `0 0 ${w} ${hh}`, width: w, height: hh, 'aria-hidden': 'true', innerHTML: body })
}
Icon.props = ['name']

const quickTools = [
  { icon: 'fileNew' }, { icon: 'fileOpen' }, { icon: 'save' }, { icon: 'saveAs' }, { icon: 'mobileOpen' },
  { icon: 'mobileImport' }, { icon: 'print' }, { icon: 'undo', caret: true }, { icon: 'redo', caret: true }
]
const ribbonTabs = ['Home', 'Insert', 'Annotate', 'Parametric', 'View', 'Manage', 'Output', 'Add-ins', 'Collaborate', 'Express Tools', 'Featured Apps']
const drawTools = [
  { icon: 'line', label: 'Line' },
  { icon: 'polyline', label: 'Polyline' },
  { icon: 'circle', label: 'Circle', caret: true },
  { icon: 'arc', label: 'Arc', caret: true }
]
const drawSmall = ['rectTool', 'ellipseTool', 'hatch']
const modifyTools = [
  { icon: 'move' }, { icon: 'rotate' }, { icon: 'trim', caret: true }, { icon: 'erase' },
  { icon: 'copy' }, { icon: 'mirror' }, { icon: 'fillet', caret: true }, { icon: 'explode' },
  { icon: 'stretch' }, { icon: 'scale' }, { icon: 'array', caret: true }, { icon: 'offset' }
]
const layerTools = ['layOff', 'layCurrent', 'layFreeze', 'layLock', 'layPrev', 'layOn', 'layMatch', 'layThaw', 'layUnlock', 'layMerge']
const collapsedPanels = [
  { icon: 'props', label: 'Properties' },
  { icon: 'groups', label: 'Groups' },
  { icon: 'ruler', label: 'Utilities' },
  { icon: 'clipboard', label: 'Clipboard' },
  { icon: 'viewBase', label: 'View' }
]
const statusGroups = [
  { items: [{ text: 'MODEL' }], cls: 'model-space' },
  { items: [{ icon: 'stGrid' }, { icon: 'stDots' }, 'caret'] },
  { items: [{ icon: 'stDyn', on: true }], cls: 'tight' },
  { items: [{ icon: 'stOrtho' }, { icon: 'stPolar', on: true }, 'caret', { icon: 'stIso' }, 'caret'], cls: 'tight' },
  { items: [{ icon: 'stAngle', on: true }, { icon: 'stSnap', on: true }, 'caret'] },
  { items: [{ icon: 'stAnno', on: true }, { icon: 'stAuto' }, { icon: 'stScale' }, { text: '1:1', caret: true }], cls: 'scale' },
  { items: [{ icon: 'stGear' }, 'caret'], cls: 'tight' },
  { items: [{ icon: 'stPlus' }] },
  { items: [{ icon: 'stShapes' }] },
  { items: [{ icon: 'stFile' }], cls: 'wide' },
  { items: [{ icon: 'stFull' }], cls: 'near' },
  { items: [{ icon: 'stMenu' }] }
]
const apps = [
  { icon: 'taskView' },
  { icon: 'folder', state: 'running' },
  { icon: 'edge', state: 'running' },
  { icon: 'store' },
  { icon: 'word' },
  { icon: 'notepad', state: 'running' },
  { icon: 'excel' },
  { icon: 'autocad', state: 'current' },
  { icon: 'chrome', state: 'running badge' },
  { icon: 'filezilla', state: 'running' }
]

// a square is red when its row and column have the same parity
const isRed = (n) => (Math.floor(n / 8) + n) % 2 === 0
</script>

<style>
body {
  margin: 0;
  overflow: hidden;
}
</style>

<style scoped>
.desktop {
  --dark: #222832;
  --panel: #3b4453;
  --light: #4e5a6e;
  --gray: #d9d9d9;
  display: flex;
  flex-direction: column;
  height: 100vh;
  overflow: hidden;
  background: #e6e6e6;
  color: #f5f5f5;
  font: 34px/48px 'Open Sans', 'Noto Sans', sans-serif;
  white-space: nowrap;
}
.desktop :deep(svg) {
  display: block;
  flex: none;
  overflow: visible;
}
.btn {
  display: flex;
  align-items: center;
  justify-content: center;
  padding: 0;
  border: 0;
  background: none;
  color: inherit;
  font: inherit;
}
a {
  color: inherit;
  text-decoration: none;
}
input,
select {
  min-width: 0;
  padding: 0;
  border: 0;
  outline: 0;
  border-radius: 0;
  background: none;
  color: inherit;
  font: inherit;
}
.caret {
  flex: none;
  border: solid transparent;
  border-width: 9px 8px 0;
  border-top-color: var(--gray);
}
.caret.mid {
  border-width: 12px 12px 0;
}
.caret.dim {
  border-top-color: #9b9ea3;
}
.caret.up {
  border-width: 0 12px 12px;
  border-bottom-color: #4d4d4f;
}

/* strip of the window behind */
.behind {
  display: flex;
  align-items: flex-start;
  height: 23px;
  overflow: hidden;
  background: linear-gradient(#f1f1f1, #e2e2e2);
  color: #8b8b8b;
}
.behind-title {
  margin: -5px auto 0 16px;
}
.behind-btn {
  margin-right: 108px;
}
.behind-btn.last {
  margin-right: 56px;
}

.window {
  position: relative;
  flex: 1;
  min-height: 0;
  display: flex;
  flex-direction: column;
  border: solid #0696d7;
  border-width: 3px 3px 3px 0;
  border-radius: 0 24px 24px 0;
  background: var(--dark);
  overflow: hidden;
}

/* title bar */
.titlebar {
  display: flex;
  align-items: center;
  height: 92px;
  padding-bottom: 13px;
}
.quick {
  display: flex;
  align-items: center;
  gap: 24px;
  width: 1269px;
  padding-left: 10px;
}
.logo {
  gap: 9px;
  margin-right: 10px;
}
.tool {
  gap: 20px;
}
.share {
  gap: 12px;
  color: #88c9fb;
}
.doc-name {
  flex: 1;
}
.doc-name,
.share,
.user {
  line-height: 50px;
}
.account {
  display: flex;
  align-items: center;
  width: 1991px;
}
.keyword {
  width: 524px;
  height: 60px;
  margin-left: 18px;
  padding-left: 10px;
  background: #485062;
}
.keyword::placeholder {
  color: #b9bdc6;
  opacity: 1;
  font-size: 31px;
  font-style: italic;
  font-weight: 600;
}
.find {
  margin-left: 17px;
}
.user {
  width: 333px;
  margin-left: 26px;
  gap: 15px;
}
.user .caret {
  margin-left: auto;
}
.cart {
  margin-left: 38px;
}
.apps {
  margin-left: 28px;
}
.bar {
  width: 2px;
  height: 54px;
  margin: 0 28px 0 26px;
  background: #4e5a6e;
}
.feedback {
  margin-left: 24px;
}
.win-controls {
  display: flex;
  margin-left: auto;
}
.win-controls .btn {
  width: 138px;
  height: 60px;
}

/* ribbon */
.ribbon-tabs {
  display: flex;
  height: 60px;
  line-height: 64px;
  color: #bfbfbf;
}
.ribbon-tabs a {
  padding: 0 29px 0 30px;
}
.ribbon-tabs .active {
  padding: 0 28px 0 16px;
  background: var(--panel);
  color: #fff;
}
.ribbon-tabs a:nth-child(2) {
  padding-left: 33px;
}
.collapse {
  gap: 14px;
  margin-left: 62px;
}
.ribbon {
  display: flex;
  height: 291px;
  margin-right: 11px;
  padding: 3px 0;
  background: var(--panel);
}
.panel {
  display: flex;
  flex-direction: column;
  box-sizing: border-box;
  border-right: 3px solid var(--dark);
}
.panel-body {
  flex: 1;
  display: grid;
  align-items: start;
}
.panel-title {
  gap: 18px;
}
.big {
  flex-direction: column;
  padding-top: 21px;
}
.big span {
  margin-top: 11px;
}
.big .caret {
  margin-top: 7px;
}
.tools {
  display: grid;
  gap: 24px 0;
  padding-top: 24px;
  justify-items: start;
}
.draw {
  width: 651px;
}
.draw .panel-body {
  grid-template-columns: 93px 162px 132px 144px 1fr;
  column-gap: 0;
}
.draw .tools {
  padding-left: 3px;
}
.draw .panel-title {
  padding-right: 18px;
}
.modify {
  width: 399px;
  padding-left: 21px;
}
.modify .panel-title {
  padding-right: 22px;
}
.modify .tools {
  grid-template-columns: 87px 87px 122px 48px;
}
.annotation {
  width: 442px;
}
.annotation .panel-body {
  padding-left: 22px;
  grid-template-columns: 96px 218px 1fr;
}
.layers {
  width: 822px;
}
.layers .panel-body {
  grid-template-columns: 188px 624px;
}
.combo {
  display: flex;
  align-items: center;
  gap: 18px;
  box-sizing: border-box;
  height: 66px;
  margin-top: 15px;
  padding: 0 4px 0 16px;
  border: 3px solid #262c38;
  background: var(--light);
}
.combo select {
  flex: 1;
  appearance: none;
}
.layers .tools {
  grid-template-columns: repeat(5, 72px);
  padding: 15px 0 0 12px;
}
.block {
  width: 478px;
  border-right: 0;
}
.block .panel-body {
  grid-template-columns: 124px 249px 1fr;
}
.insert {
  padding-top: 15px;
}
.insert span {
  margin-top: 14px;
}
.detect {
  display: flex;
  align-items: flex-start;
  padding-left: 30px;
}
.detect .big {
  width: 170px;
}
.detect > .caret {
  margin: 174px 0 0 11px;
}
.folded {
  flex-direction: column;
  justify-content: flex-start;
  box-sizing: border-box;
  width: 180px;
  margin-right: 3px;
  padding: 12px 0;
  border: 3px solid #262c38;
  background: var(--light);
}
.folded span {
  margin: 11px 0 auto;
}

/* drawing tabs */
.file-tabs {
  display: flex;
  align-items: center;
  height: 72px;
  margin-right: 8px;
  padding: 9px 0 0 26px;
  border-bottom: 12px solid var(--panel);
}
.file-tabs a,
.layouts a {
  padding-top: 3px;
}
.slash.first {
  margin: 0 25px 0 29px;
}
.start {
  width: 95px;
}
.slant {
  display: flex;
  align-items: center;
  height: 72px;
  background: var(--panel);
  font-weight: 700;
  clip-path: polygon(30px 0, 100% 0, calc(100% - 30px) 100%, 0 100%);
}
.file {
  width: 314px;
  padding: 0 36px 0 51px;
  justify-content: space-between;
}
.add {
  margin-left: 25px;
}
.slash.last {
  margin-left: 30px;
}

/* drawing area */
.canvas {
  position: relative;
  flex: 1;
  min-height: 0;
  overflow: hidden;
  background: #212830;
}
.view-label {
  padding-top: 7px;
  color: #fff;
}
.view-controls {
  position: absolute;
  top: 20px;
  right: 29px;
  display: flex;
  gap: 30px;
}
.board {
  position: absolute;
  left: 1270px;
  top: 186px;
  display: grid;
  grid-template-columns: repeat(8, 1fr);
  width: 802px;
  height: 802px;
  background: #fff;
}
.board .red {
  background: #f00;
}
.ucs {
  position: absolute;
  left: 1257px;
  top: 796px;
}
.crosshair {
  position: absolute;
  left: 2257px;
  top: 440px;
}
.viewcube {
  position: absolute;
  top: 95px;
  right: 55px;
  display: flex;
  flex-direction: column;
  align-items: center;
  gap: 41px;
}
.wcs {
  gap: 15px;
  box-sizing: border-box;
  width: 141px;
  height: 51px;
  border: 5px solid #8e8f9f;
  border-radius: 12px;
  background: #9da1ad;
  color: #4c4f55;
  font: 30px/40px 'Liberation Sans', Arial, sans-serif;
}
.navbar {
  position: absolute;
  top: 483px;
  right: 12px;
  display: flex;
  flex-direction: column;
  align-items: center;
  box-sizing: border-box;
  width: 88px;
  height: 608px;
  padding: 3px 5px;
  border-radius: 4px;
  background: #5a5e62;
}
.navbar .corner {
  align-self: flex-end;
  margin-bottom: 14px;
}
.navbar .corner.more {
  margin: auto 0 0;
}
.navbar .caret {
  border-top-color: #45495a;
  margin: 20px 0 15px;
}
.navbar hr {
  width: 82px;
  height: 1px;
  margin: 0 0 10px;
  border: 0;
  background: #666a6e;
}
.navbar .btn + .btn {
  margin-top: 12px;
}
.history {
  position: absolute;
  left: 934px;
  bottom: 90px;
  display: flex;
  flex-direction: column;
  align-items: flex-start;
  gap: 15px;
  color: #75787b;
  font: 35px/46px 'DejaVu Sans Mono', monospace;
}
.history p {
  margin: 0;
  padding: 0 4px 0 6px;
  border-radius: 8px;
  background: #393c40;
}
.history .long {
  background: #353941;
  color: #5f636a;
}
.command {
  position: absolute;
  left: 742px;
  right: 775px;
  bottom: 0;
  display: flex;
  height: 81px;
}
.command-grip {
  display: flex;
  align-items: center;
  gap: 20px;
  width: 162px;
  padding-left: 12px;
  border-radius: 8px 0 0 8px;
  background: #2a2f3b;
}
.command-grip .btn:last-child {
  margin-left: 14px;
}
.command-box {
  flex: 1;
  display: flex;
  align-items: center;
  height: 75px;
  margin-top: 3px;
  padding: 0 12px;
  border-radius: 6px;
  background: #bcbdbf;
}
.command-box .mid {
  margin-left: 6px;
  border-top-color: #4d4d4f;
}
.command-box input {
  flex: 1;
  margin-left: 20px;
}
.command-box input::placeholder {
  color: #65666a;
  opacity: 1;
  font: italic 35px/48px 'DejaVu Sans Mono', monospace;
}

/* layouts and status */
.bottom {
  display: flex;
  justify-content: space-between;
  height: 96px;
  border-top: 12px solid var(--panel);
}
.layouts {
  display: flex;
  align-items: center;
  height: 72px;
  padding-left: 26px;
}
.model {
  justify-content: center;
  width: 209px;
  margin-left: 24px;
}
.layout {
  width: 120px;
  margin: 0 30px 0 21px;
}
.slash + .layout {
  margin-left: 26px;
}
.layouts .btn {
  margin: 0 30px 0 30px;
}
.layouts .btn:first-child {
  margin: 0;
}
.status {
  display: flex;
  padding: 6px 5px 0 0;
}
.status-group {
  display: flex;
  height: 72px;
  margin-right: 9px;
  background: var(--panel);
}
.status-group.tight {
  margin-right: 3px;
}
.status-group.near {
  margin-right: 6px;
}
.cell {
  width: 66px;
  margin: 3px;
}
.cell.on {
  background: #6190c1;
}
.drop {
  width: 48px;
}
.word {
  gap: 12px;
  padding-top: 2px;
}
.model-space {
  width: 143px;
  justify-content: center;
}
.scale .word {
  width: 100px;
}
.wide {
  width: 90px;
  justify-content: center;
}

/* taskbar */
.taskbar {
  display: flex;
  align-items: center;
  height: 140px;
  border-top: 3px solid #a9bdb8;
  background: linear-gradient(90deg, #cdeedb 0, #cbf1e3 16%, #c8f1ec 44%, #c9f1ea 62%, #d8ebc6 69%, #dbeac2 72%, #c8f1ec 78%, #d0ebf1 84%, #d4ebf3 100%);
  color: #1a1a1a;
}
.weather {
  width: 674px;
  padding-left: 25px;
  justify-content: flex-start;
}
.task-center {
  display: flex;
  align-items: center;
}
.app {
  position: relative;
  width: 114px;
  height: 114px;
  margin-right: 18px;
  border-radius: 12px;
}
.app:first-child {
  width: 132px;
  margin-right: 10px;
}
.app.badge :deep(svg) {
  margin: -15px 0 0 15px;
}
.app.running::after,
.app.current::after {
  content: '';
  position: absolute;
  bottom: 0;
  width: 18px;
  height: 9px;
  border-radius: 5px;
  background: #6f8a84;
}
.app.current {
  background: #e5f7f1;
  box-shadow: 0 2px 2px #a9c9c2;
}
.app.current::after {
  width: 48px;
  background: #0078d7;
}
.search {
  display: flex;
  align-items: center;
  gap: 32px;
  box-sizing: border-box;
  width: 657px;
  height: 96px;
  margin-right: 16px;
  padding-left: 30px;
  border: 2px solid #bfe0d8;
  border-bottom-color: #a5cabf;
  border-radius: 48px;
  background: #eefaf7;
}
.search input::placeholder {
  color: #5c6361;
  opacity: 1;
  font-size: 39px;
}
.tray {
  display: flex;
  align-items: center;
  margin-left: auto;
  padding-right: 57px;
}
.tray-cloud {
  margin-left: 56px;
}
.lang {
  width: 67px;
  margin: 0 56px 0 57px;
  text-align: center;
}
.tray-icons {
  display: flex;
  align-items: center;
  gap: 24px;
}
.clock {
  width: 234px;
  text-align: right;
}
</style>
